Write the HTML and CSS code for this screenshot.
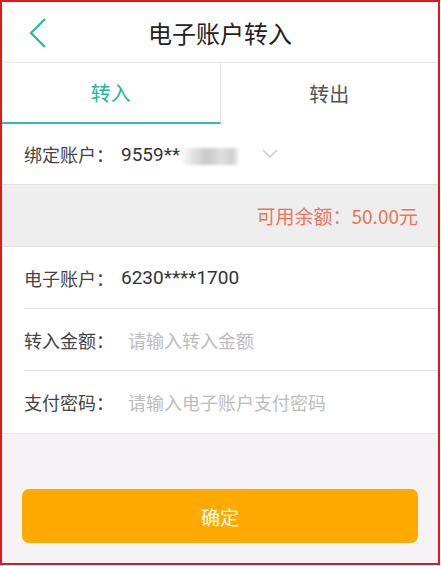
FILE: index.html
```html
<!DOCTYPE html>
<html lang="zh-CN">
<head>
  <meta charset="UTF-8" />
  <meta name="viewport" content="width=device-width, initial-scale=1.0" />
  <title>电子账户转入</title>
  <link rel="stylesheet" href="styles.css">
</head>
<body>
  <div class="screen">
    <div class="topbar">
      <span class="back">
        <svg width="20" height="32" viewBox="0 0 20 32">
          <polyline points="17,2 3,16 17,30" fill="none" stroke="#25b9a2" stroke-width="2.2" />
        </svg>
      </span>
      <h1>电子账户转入</h1>
    </div>

    <div class="tabs">
      <div class="tab active">转入</div>
      <div class="tab">转出</div>
    </div>

    <div class="bind-row">
      <span class="label">绑定账户：</span>
      <span class="value">9559**</span>
      <span class="masked"></span>
      <svg class="arrow" width="16" height="10" viewBox="0 0 16 10">
        <polyline points="1,1 8,8 15,1" fill="none" stroke="#c8c8c8" stroke-width="1.4" />
      </svg>
    </div>

    <div class="balance">可用余额：50.00元</div>

    <div class="fields">
      <div class="field">
        <span class="label">电子账户：</span>
        <span class="value">6230****1700</span>
      </div>
      <div class="field">
        <span class="label">转入金额：</span>
        <input type="text" placeholder="请输入转入金额" />
      </div>
      <div class="field">
        <span class="label">支付密码：</span>
        <input type="password" placeholder="请输入电子账户支付密码" />
      </div>
    </div>

    <div class="footer">
      <button type="button" class="submit">确定</button>
    </div>
  </div>
</body>
</html>
```

FILE: styles.css
```css
* {
  box-sizing: border-box;
}

body {
  margin: 0;
  font-family: "Noto Sans CJK SC", "Noto Sans", sans-serif;
  background: #fff;
  color: #333;
}

.screen {
  width: 440px;
  height: 565px;
  border: 2px solid #e8141c;
  background: #f6f3f6;
  display: flex;
  flex-direction: column;
  overflow: hidden;
}

.topbar {
  height: 61px;
  flex: none;
  background: #fff;
  border-bottom: 1px solid #e6e6e6;
  display: flex;
  align-items: center;
  justify-content: center;
  position: relative;
}

.back {
  position: absolute;
  left: 26px;
  top: 15px;
  display: flex;
}

.topbar h1 {
  margin: 0;
  font-size: 24px;
  font-weight: 400;
  color: #222;
}

.tabs {
  height: 61px;
  flex: none;
  display: flex;
  background: #fff;
}

.tab {
  flex: 1;
  display: flex;
  align-items: center;
  justify-content: center;
  font-size: 20px;
  color: #555;
}

.tab:first-child {
  border-right: 1px solid #e2e2e2;
}

.tab.active {
  color: #25b49e;
  border-bottom: 2px solid #2cbfa6;
}

.bind-row {
  height: 61px;
  flex: none;
  background: #fff;
  display: flex;
  align-items: center;
  padding-left: 22px;
  border-bottom: 1px solid #e2e2e2;
}

.label {
  font-size: 18px;
  color: #444;
  width: 97px;
  flex: none;
}

.value {
  font-size: 19px;
  color: #333;
  font-family: Roboto, "Noto Sans CJK SC", sans-serif;
}

/* hidden card digits */
.masked {
  display: inline-block;
  width: 60px;
  height: 17px;
  margin-top: 4px;
  background: linear-gradient(90deg, #fff 0%, #e4e4e4 20%, #c9c9c9 45%, #dedede 70%, #cfcfcf 88%, #fff 100%);
  filter: blur(1.5px);
}

.arrow {
  margin-left: 22px;
}

.balance {
  height: 62px;
  flex: none;
  background: #eeeeee;
  border-bottom: 1px solid #e2e2e2;
  display: flex;
  align-items: center;
  justify-content: flex-end;
  padding-right: 20px;
  font-size: 19px;
  color: #ef7358;
}

.fields {
  background: #fff;
  padding-left: 22px;
  border-bottom: 1px solid #ebe8eb;
  flex: none;
}

.field {
  height: 62px;
  display: flex;
  align-items: center;
  border-bottom: 1px solid #e2e2e2;
}

.field:last-child {
  border-bottom: none;
}

.field input {
  border: none;
  outline: none;
  padding: 0 0 0 7px;
  font-family: inherit;
  font-size: 18px;
  flex: 1;
  background: transparent;
}

.field input::placeholder {
  color: #bcbcbc;
}

.footer {
  flex: 1;
  padding: 55px 20px 0 20px;
}

.submit {
  width: 100%;
  height: 54px;
  border: none;
  border-radius: 7px;
  background: #ffaa00;
  color: #fff;
  font-family: inherit;
  font-size: 19px;
  cursor: pointer;
}
```
